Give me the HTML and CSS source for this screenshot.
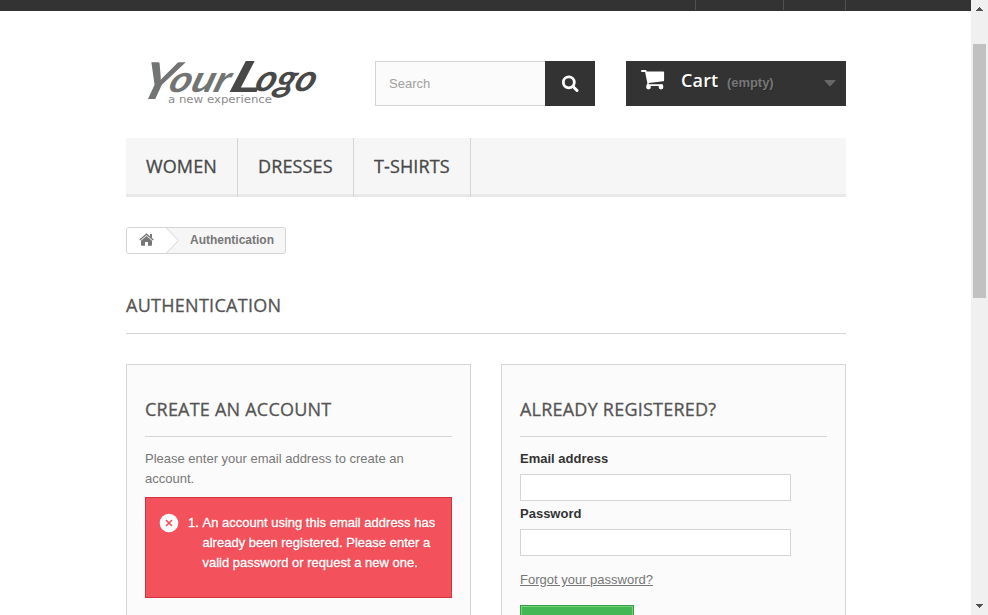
FILE: index.html
```html
<!DOCTYPE html>
<html lang="en">
<head>
<meta charset="utf-8">
<title>Login</title>
<link rel="stylesheet" href="styles.css">
</head>
<body>
<div class="page">
  <div class="topbar"><div class="container topbar-cells"><span class="cell"></span><span class="cell cell-short"></span></div></div>
  <div class="container">
    <header class="header">
      <svg class="logo" width="200" height="60" viewBox="0 0 200 60" role="img">
        <text class="logo-script" transform="translate(11 36) skewX(-18)"><tspan class="logo-your logo-first" x="2" y="7" textLength="34" lengthAdjust="spacingAndGlyphs">Y</tspan><tspan class="logo-your" x="30" y="0" textLength="60" lengthAdjust="spacingAndGlyphs">our</tspan><tspan class="logo-name logo-cap" x="90" y="0" textLength="33" lengthAdjust="spacingAndGlyphs">L</tspan><tspan class="logo-name" x="116" y="-1" textLength="60" lengthAdjust="spacingAndGlyphs">ogo</tspan></text>
        <text class="logo-tag" x="42" y="47" textLength="104" lengthAdjust="spacingAndGlyphs">a new experience</text>
      </svg>
      <form class="search">
        <input class="search-input" type="text" placeholder="Search">
        <button class="search-button" type="button">
          <svg width="18" height="18" viewBox="0 0 18 18"><circle cx="7.800" cy="7.300" r="5.500" fill="none" stroke="#fff" stroke-width="2.800"/><path d="M12 11.500l4 4" stroke="#fff" stroke-width="3" stroke-linecap="round"/></svg>
        </button>
      </form>
      <a class="cart">
        <svg class="cart-icon" width="24" height="20" viewBox="0 0 24 20" fill="#fff"><path d="M.9 0h3.600c.8 0 1.100.7 1.300 1.600h16.300c.7 0 1 .4 1 1v7.600c0 .6-.3.9-.9 1L7.600 12.900l.3 1.300h13.200c.7 0 1 .3 1 .8s-.3.900-1 .9H6.600c-.7 0-1.100-.4-.9-1.100l.7-1.500L4.100 1.900H.9C.3 1.900 0 1.500 0 1S.3 0 .9 0z"/><circle cx="7.500" cy="17" r="2.400"/><circle cx="20" cy="17" r="2.400"/></svg>
        <b class="cart-label">Cart</b><span class="cart-empty">(empty)</span>
        <svg class="cart-arrow" width="12" height="7" viewBox="0 0 12 7"><path d="M.8.5h10.400L6.500 5.700q-.5.500-1 0z" fill="#686666" stroke="#686666" stroke-linejoin="round"/></svg>
      </a>
    </header>
    <nav class="menu"><a class="women">Women</a><a class="dresses">Dresses</a><a class="shirts">T-shirts</a></nav>
    <div class="breadcrumb">
      <a class="home"><svg width="15" height="13" viewBox="0 0 15 13" fill="#777"><path d="M7.500 3.100L13 7.700v4.300q0 .7-.7.700H9V9H6v3.700H2.700q-.7 0-.7-.7V7.700z"/><path d="M.7 7L7.500 1.200 14.300 7" fill="none" stroke="#777" stroke-width="1.300"/><path d="M11 1h2v4.200l-2-1.700z"/></svg></a>
      <svg class="chevron" width="14" height="25" viewBox="0 0 14 25"><path d="M0 0L12.500 12.500 0 25z" fill="#fff"/><path d="M.5 0L12.500 12.500.5 25" fill="none" stroke="#d6d4d4"/></svg>
      <span class="crumb">Authentication</span>
    </div>
    <h1 class="title">Authentication</h1>
    <main class="columns">
      <section class="box">
        <h3 class="subtitle">Create an account</h3>
        <p class="intro">Please enter your email address to create an account.</p>
        <div class="alert">
          <svg class="alert-icon" width="20" height="20" viewBox="0 0 20 20"><circle cx="10" cy="10" r="9.300" fill="#fff"/><path d="M7 7l6 6M13 7l-6 6" stroke="#f3515c" stroke-width="1.700"/></svg>
          <ol class="errors"><li>An account using this email address has already been registered. Please enter a valid password or request a new one.</li></ol>
        </div>
      </section>
      <section class="box">
        <h3 class="subtitle">Already registered?</h3>
        <label class="label" for="email">Email address</label>
        <input class="field" id="email" type="text">
        <label class="label" for="passwd">Password</label>
        <input class="field" id="passwd" type="password">
        <a class="forgot">Forgot your password?</a>
        <button class="submit" type="button"></button>
      </section>
    </main>
  </div>
</div>
<div class="scrollbar">
  <svg class="arrow" width="7" height="4" viewBox="0 0 7 4" shape-rendering="crispEdges"><path d="M3 0h1v1h1v1h1v1h1v1H0V3h1V2h1V1h1z" fill="#505050"/></svg>
  <div class="thumb"></div>
  <svg class="arrow arrow-down" width="7" height="4" viewBox="0 0 7 4" shape-rendering="crispEdges"><path d="M0 0h7v1H6v1H5v1H4v1H3V3H2V2H1V1H0z" fill="#505050"/></svg>
</div>
</body>
</html>
```

FILE: styles.css
```css
* { box-sizing: border-box; }
html, body { margin: 0; height: 615px; overflow: hidden; }
body { display: flex; background: #fff; color: #777; font: 13px/20px "Liberation Sans", Arial, sans-serif; }
.page { width: 971px; height: 615px; overflow: hidden; }
.container { width: 720px; margin: 0 auto 0 126px; }
.topbar { height: 11px; background: #333; }
.topbar-cells { display: flex; justify-content: flex-end; height: 10px; border-right: 1px solid #515151; }
.cell { width: 88px; border-left: 1px solid #515151; }
.cell-short { width: 62px; }
.header { display: flex; height: 127px; padding-top: 50px; }
.logo { display: block; margin: -5px 49px 0 0; flex: none; overflow: visible; }
.logo-script { font: italic 700 37px "Lato", sans-serif; }
.logo-cap { font-size: 43px; }
.logo-first { font-size: 51px; }
.logo-your { fill: #727473; }
.logo-name { fill: #484848; }
.logo-tag { font: 11px "DejaVu Sans", sans-serif; fill: #8b8b8b; }
.search { display: flex; width: 220px; height: 45px; margin-right: 31px; flex: none; }
.search-input { width: 170px; padding: 0 13px; border: 1px solid #d6d4d4; border-right: 0; background: #fbfbfb; font: 13px "Liberation Sans", Arial, sans-serif; outline: 0; }
.search-input::placeholder { color: #a0a0a0; }
.search-button { display: flex; align-items: center; justify-content: center; width: 50px; padding: 0; border: 0; background: #333; }
.cart { display: flex; width: 220px; height: 45px; background: #333; flex: none; text-shadow: 1px 1px rgba(0,0,0,.2); }
.cart-icon { margin: 9px 16px 0 15px; }
.cart-label { width: 46px; margin-top: 8px; color: #fff; font: 600 18px/23px "Open Sans", sans-serif; letter-spacing: .15px; }
.cart-empty { width: 60px; margin-top: 12px; color: #777; font-weight: bold; font-size: 13px; letter-spacing: -.05px; }
.cart-arrow { margin: 19px 0 0 37px; }
.menu { display: flex; height: 59px; background: #f6f6f6; border-bottom: 3px solid #e9e9e9; }
.menu a { height: 59px; padding: 17px 0 0 20px; border-right: 1px solid #d6d4d4; color: #484848; font: 500 18px/23px "Open Sans", sans-serif; letter-spacing: .12px; -webkit-text-stroke: .3px #484848; text-transform: uppercase; white-space: nowrap; }
.menu .women { width: 112px; }
.menu .dresses { width: 116px; }
.menu .shirts { width: 117px; }
.breadcrumb { display: flex; width: 160px; height: 27px; margin-top: 30px; border: 1px solid #d6d4d4; border-radius: 3px; background: #f6f6f6; overflow: hidden; }
.home { width: 39px; padding: 5px 0 0 12px; background: #fff; line-height: 0; }
.crumb { padding: 2px 0 0 10px; font-size: 12px; font-weight: bold; line-height: 20px; }
.title { height: 38px; margin: 42px 0 30px; border-bottom: 1px solid #d6d4d4; color: #555454; font: 500 18px/19px "Open Sans", sans-serif; letter-spacing: .28px; -webkit-text-stroke: .3px #555454; text-transform: uppercase; }
.columns { display: flex; gap: 30px; }
.box { width: 345px; height: 320px; padding: 33px 18px; border: 1px solid #d6d4d4; background: #fbfbfb; flex: none; }
.subtitle { height: 39px; margin: 0 0 12px; border-bottom: 1px solid #d6d4d4; color: #555454; font: 500 18px/22px "Open Sans", sans-serif; letter-spacing: .22px; -webkit-text-stroke: .3px #555454; text-transform: uppercase; }
.intro { margin: 0 0 9px; }
.alert { display: flex; height: 101px; margin-top: -1px; padding: 15px 13px; border: 1px solid #d4323d; background: #f3515c; color: #fff; text-shadow: 1px 1px rgba(0,0,0,.1); -webkit-text-stroke: .3px #fff; }
.alert-icon { flex: none; margin-right: 10px; }
.errors { width: 265px; margin: 0; padding: 0 0 0 13.500px; flex: none; }
.label { display: block; color: #333; font-weight: bold; line-height: 20px; }
.field { display: block; width: 271px; height: 27px; margin: 5px 0 3px; border: 1px solid #d6d4d4; background: #fff; }
.forgot { display: block; margin-top: 14px; text-decoration: underline; }
.submit { display: block; width: 114px; height: 38px; margin-top: 15px; border: 1px solid #399a49; background: #43b754; box-shadow: inset 0 0 0 1px #74d578; }
.scrollbar { display: flex; flex-direction: column; align-items: center; width: 17px; height: 615px; background: #f0f0f0; }
.arrow { margin: 7px 0 33px; }
.thumb { width: 13px; height: 254px; background: #c1c1c1; }
.arrow-down { margin: auto 0 7px; }
```
